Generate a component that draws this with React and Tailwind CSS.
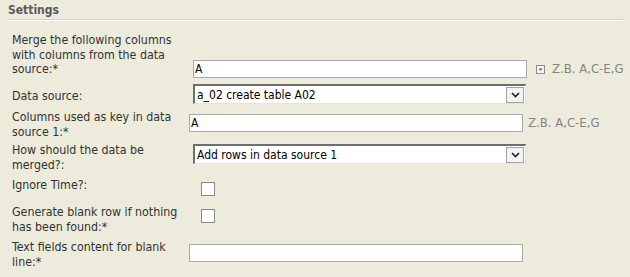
import React from "react";

const font = { fontFamily: '"DejaVu Sans Condensed", "DejaVu Sans", Tahoma, sans-serif' };

function TextInput({ value = "", className = "" }) {
  return (
    <div
      className={
        "h-[18px] w-[334px] bg-white border border-[#a9a9a9] flex items-center px-[1px] text-[12px] text-black " +
        className
      }
    >
      {value}
    </div>
  );
}

function Select({ value, className = "" }) {
  return (
    <div
      className={
        "h-[20px] w-[333px] bg-white flex items-center border-l-2 border-t-2 border-[#6e6e6e] border-r border-b border-r-[#e3e3e3] border-b-[#e3e3e3] " +
        className
      }
    >
      <div className="flex-1 pl-[2px] text-[12px] text-black leading-none">{value}</div>
      <div className="w-[18px] h-[16px] mr-[1px] border border-[#a3a3a3] bg-[#f3f3f3] flex items-center justify-center">
        <svg width="9" height="6" viewBox="0 0 9 6">
          <path d="M1 1 L4.5 4.5 L8 1" stroke="#222" strokeWidth="1.6" fill="none" />
        </svg>
      </div>
    </div>
  );
}

function Checkbox({ className = "" }) {
  return <div className={"w-[14px] h-[14px] bg-white border border-[#8a8a8a] " + className} />;
}

function Hint({ className = "" }) {
  return <span className={"text-[13px] text-[#858585] " + className}>Z.B. A,C-E,G</span>;
}

export default function App() {
  return (
    <div className="w-[630px] h-[277px] bg-[#ecebdc] overflow-hidden" style={font}>
      <div className="px-[7px] pt-[2px]">
        <div className="pl-[1px] text-[12px] font-bold text-[#5a5a5a] leading-[16px]">Settings</div>
        <div className="mt-[1px] h-[2px] border-t border-[#d2d2c8] bg-white" />
      </div>
      <div className="pl-[12px] text-[12.3px] leading-[14.5px] text-[#333333]">
        {/* Row 1 */}
        <div className="flex mt-[12px]">
          <div className="w-[177px]">Merge the following columns with columns from the data source:*</div>
          <TextInput value="A" className="mt-[27px] ml-[4px]" />
          <div className="mt-[27px] ml-[9px] h-[18px] flex items-center gap-[7px]">
            <svg width="9" height="9" viewBox="0 0 9 9">
              <rect x="0.5" y="0.5" width="8" height="8" fill="#f4f4ee" stroke="#8c8c8c" />
              <path d="M2.5 3.5 L6.5 3.5 L4.5 6 Z" fill="#666" />
            </svg>
            <Hint />
          </div>
        </div>
        {/* Row 2 */}
        <div className="flex mt-[6px]">
          <div className="w-[177px] pt-[5px]">Data source:</div>
          <Select value="a_02 create table A02" className="ml-[4px]" />
        </div>
        {/* Row 3 */}
        <div className="flex mt-[6px]">
          <div className="w-[177px]">Columns used as key in data source 1:*</div>
          <TextInput value="A" className="mt-[4px]" />
          <div className="mt-[4px] ml-[5px] h-[18px] flex items-center">
            <Hint />
          </div>
        </div>
        {/* Row 4 */}
        <div className="flex mt-[4px]">
          <div className="w-[177px]">How should the data be merged?:</div>
          <Select value="Add rows in data source 1" className="ml-[4px] mt-[1px]" />
        </div>
        {/* Row 5 */}
        <div className="flex mt-[6px]">
          <div className="w-[177px]">Ignore Time?:</div>
          <Checkbox className="mt-[4px] ml-[12px]" />
        </div>
        {/* Row 6 */}
        <div className="flex mt-[9px]">
          <div className="w-[177px]">Generate blank row if nothing has been found:*</div>
          <Checkbox className="mt-[4px] ml-[12px]" />
        </div>
        {/* Row 7 */}
        <div className="flex mt-[6px]">
          <div className="w-[177px]">Text fields content for blank line:*</div>
          <TextInput className="mt-[4px]" />
        </div>
      </div>
    </div>
  );
}
